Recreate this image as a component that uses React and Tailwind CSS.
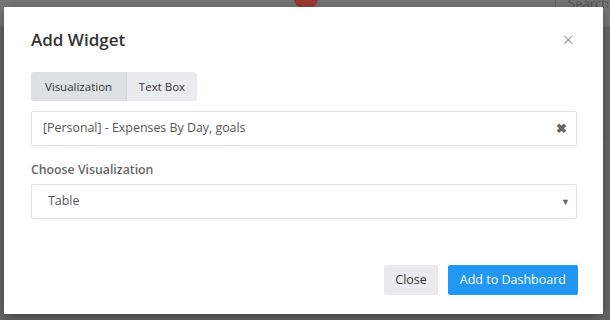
import React, { useState } from "react";

const font = { fontFamily: "'Open Sans', 'Noto Sans', sans-serif" };

const AddWidgetModal = () => {
  const [tab, setTab] = useState("viz");

  return (
    <div className="absolute left-[4px] top-[7px] w-[599px] h-[307px] bg-white shadow-[0_3px_12px_rgba(0,0,0,0.35)] flex flex-col">
      <div className="flex items-center justify-between pl-[27px] pr-[29px] pt-[21px]">
        <h4 className="text-[17px] leading-[24px] font-semibold text-[#333]">Add Widget</h4>
        <button className="text-[#888] text-[20px] leading-none font-light">×</button>
      </div>

      <div className="flex flex-col px-[27px] pt-[20px]">
        <div className="flex">
          <button
            onClick={() => setTab("viz")}
            className={
              "h-[29px] w-[96px] text-[11.5px] text-[#333] rounded-l-[3px] border-r border-[#cfd6db] " +
              (tab === "viz" ? "bg-[#dbe1e5]" : "bg-[#e9ecef]")
            }
          >
            Visualization
          </button>
          <button
            onClick={() => setTab("text")}
            className={
              "h-[29px] w-[70px] text-[11.5px] text-[#333] rounded-r-[3px] " +
              (tab === "text" ? "bg-[#dbe1e5]" : "bg-[#e9ecef]")
            }
          >
            Text Box
          </button>
        </div>

        <div className="mt-[10px] h-[35px] w-[546px] border border-[#e3e3e3] rounded-[2px] flex items-center justify-between pl-[11px] pr-[9px]">
          <span className="text-[12.4px] text-[#555]">[Personal] - Expenses By Day, goals</span>
          <span className="text-[#666] text-[13px] font-bold leading-none">✖</span>
        </div>

        <label className="mt-[15px] text-[12.3px] font-semibold text-[#666] leading-[18px]">Choose Visualization</label>

        <div className="mt-[5px] h-[35px] w-[546px] border border-[#e3e3e3] rounded-[2px] flex items-center justify-between pl-[16px] pr-[6px]">
          <span className="text-[12.4px] text-[#555]">Table</span>
          <span className="text-[#666] text-[9px] leading-none">▼</span>
        </div>
      </div>

      <div className="flex justify-end gap-[10px] pr-[25px] mt-[46px]">
        <button className="h-[30px] px-[11px] bg-[#e9ecef] text-[#333] text-[12.5px] rounded-[2px]">Close</button>
        <button className="h-[30px] px-[12px] bg-[#2196f3] text-white text-[12.5px] rounded-[2px]">Add to Dashboard</button>
      </div>
    </div>
  );
};

export default function App() {
  return (
    <div style={font} className="relative w-[610px] h-[320px] bg-[#666] overflow-hidden">
      <div className="h-[27px] bg-[#777] border-b border-[#6e6e6e] flex">
        <div className="ml-[294px] w-[24px] h-[18px] mt-[-10px] rounded-full bg-[#9b3b30]" />
        <div className="ml-auto w-[55px] border-l border-[#6a6a6a] pl-[12px] text-[#555] text-[13px] leading-[10px] mt-[-2px]">Search</div>
      </div>
      <div className="h-[116px] border-b border-[#6a6a6a] bg-[#666]" />
      <AddWidgetModal />
    </div>
  );
}
